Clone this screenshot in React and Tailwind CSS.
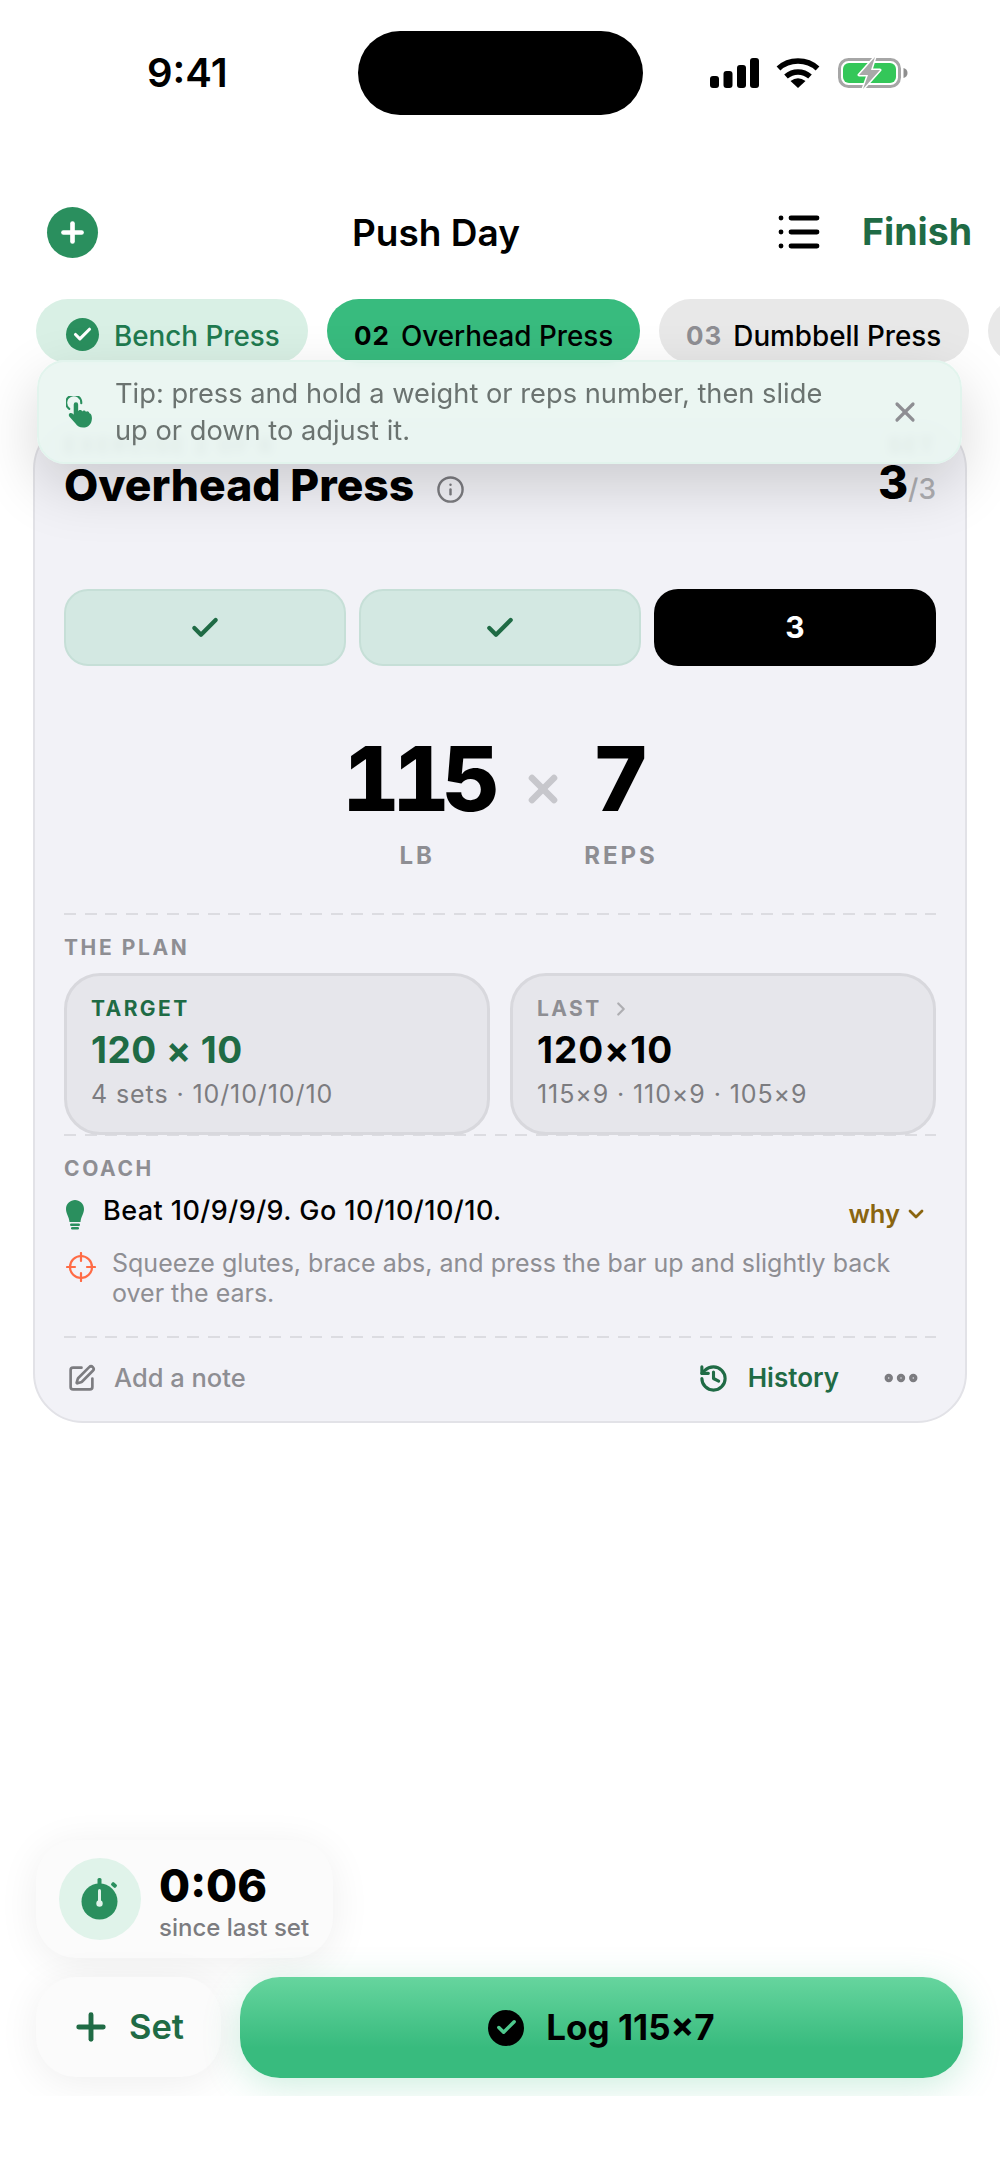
import { Check, ChevronDown, ChevronRight, Ellipsis, History, Info, List, Plus, SquarePen, X } from 'lucide-react'

const DASHES = 'h-[2px] w-full bg-[repeating-linear-gradient(90deg,#dcdce1_0,#dcdce1_12px,transparent_12px,transparent_20.5px)]'

function StatusIcons() {
  return (
    <div className="flex items-center">
      <svg width="49" height="30" viewBox="0 0 49 30" fill="#000">
        <rect x="0" y="18" width="9" height="12" rx="3" />
        <rect x="13.5" y="13" width="9" height="17" rx="3" />
        <rect x="27" y="7" width="9" height="23" rx="3" />
        <rect x="40" y="0" width="9" height="30" rx="3" />
      </svg>
      <svg className="ml-[17px]" width="44" height="30" viewBox="0 0 44 30" fill="none">
        <path d="M2.5 10.5C13 .5 31 .5 41.5 10.5" stroke="#000" strokeWidth="5.5" />
        <path d="M10 18.5C17 12.5 27 12.5 34 18.5" stroke="#000" strokeWidth="5.5" />
        <path d="M22 30L14.5 23Q22 17.5 29.5 23Z" fill="#000" />
      </svg>
      <svg className="ml-[18px]" width="70" height="32" viewBox="0 0 70 32" fill="none">
        <rect x="1.5" y="2.5" width="60" height="27" rx="9" stroke="#a6a6a6" strokeWidth="3" />
        <rect x="5" y="6" width="53" height="20" rx="6" fill="#34c759" />
        <path d="M65.5 11c2.6.6 4 2.5 4 5s-1.4 4.400-4 5z" fill="#8e8e8e" />
        <path d="M37 0L21 18h9l-5 14 17-19h-9l4-13z" fill="#a9a9a9" stroke="#fff" strokeWidth="3" strokeLinejoin="round" paintOrder="stroke" />
      </svg>
    </div>
  )
}

function StatusBar() {
  return (
    <div className="relative h-[146px] shrink-0">
      <span className="absolute left-[147px] top-[52px] text-[40px] leading-[42px] font-semibold text-black">9:41</span>
      <div className="absolute left-[358px] top-[31px] h-[84px] w-[285px] rounded-[42px] bg-black" />
      <div className="absolute left-[710px] top-[57px]"><StatusIcons /></div>
    </div>
  )
}

function Header() {
  return (
    <div className="mt-[60px] flex h-[52px] shrink-0 items-center pl-[47px] pr-[28px]">
      <div className="flex h-[51px] w-[51px] items-center justify-center rounded-full bg-[#2a8f5e]">
        <Plus size={31} strokeWidth={3.6} className="text-white" />
      </div>
      <span className="ml-[254px] text-[37px] font-semibold leading-none text-black">Push Day</span>
      <List size={48} strokeWidth={2.4} className="ml-auto text-black" />
      <span className="ml-[39px] text-[37.500px] font-bold leading-none text-[#1f6b45]">Finish</span>
    </div>
  )
}

function Chips() {
  return (
    <div className="mt-[41px] flex h-[64px] shrink-0 gap-[19px] overflow-hidden pl-[36px]">
      <div className="flex w-[272px] shrink-0 items-start gap-[15px] rounded-[32px] bg-[#d9f0e5] pl-[30px] pt-[19px]">
        <div className="flex h-[33px] w-[33px] items-center justify-center rounded-full bg-[#2a8f5e]">
          <Check size={21} strokeWidth={3.6} className="text-white" />
        </div>
        <span className="text-[27.800px] font-medium leading-[36px] text-[#1f7a4f]">Bench Press</span>
      </div>
      <div className="flex w-[313px] shrink-0 items-start gap-[11px] rounded-[32px] bg-[#38bb7e] pl-[27px] pt-[19px]">
        <span className="text-[26px] font-bold leading-[36px] tracking-[1px] text-black">02</span>
        <span className="text-[27.800px] font-medium leading-[36px] text-black">Overhead Press</span>
      </div>
      <div className="flex w-[310px] shrink-0 items-start gap-[11px] rounded-[32px] bg-[#e8e8e8] pl-[27px] pt-[19px]">
        <span className="text-[26px] font-bold leading-[36px] tracking-[1px] text-[#8e8e93]">03</span>
        <span className="text-[27.800px] font-medium leading-[36px] text-black">Dumbbell Press</span>
      </div>
      <div className="w-[200px] shrink-0 rounded-[32px] bg-[#e8e8e8]" />
    </div>
  )
}

function TipBanner() {
  return (
    <div className="absolute left-[37px] top-[360px] z-10 flex h-[104px] w-[925px] items-center rounded-[28px] border-2 border-[#e2f4ed] bg-[#e9f5f1]/90 pl-[27px] pr-[39px] shadow-[0_22px_60px_rgba(0,0,0,0.16)] backdrop-blur-[4px]">
      <svg width="27" height="32" viewBox="0 0 30 36" className="shrink-0">
        <path d="M3.500 14.500A8.500 8.500 0 1 1 17 8" fill="none" stroke="#2a8f5e" strokeWidth="2.400" strokeLinecap="round" />
        <path d="M8.500 9.500a2.500 2.500 0 0 1 5 0V17c.8-1.800 4-1.800 4.500.3.800-1.500 3.800-1.200 4.200.6 1-1.200 3.800-.6 3.800 1.600 1 0 3 1.400 3 5.500C28.800 31.500 25 35.500 19 35.500c-4 0-6.500-1.500-8.500-4.500L3.500 23c-1.800-3 1.500-5 4-3l1 1z" fill="#2a8f5e" />
      </svg>
      <p className="ml-[22px] w-[730px] text-[27.250px] leading-[37px] text-[#6b7370]">
        Tip: press and hold a weight or reps number, then slide up or down to adjust it.
      </p>
      <X size={32} strokeWidth={2.4} className="ml-auto text-[#8e8e93]" />
    </div>
  )
}

function SetPills() {
  return (
    <div className="mt-[78px] grid grid-cols-3 gap-[12.500px]">
      {[0, 1].map((i) => (
        <div key={i} className="flex h-[77px] items-center justify-center rounded-[24px] border-2 border-[#c6dfd7] bg-[#d3e8e2]">
          <Check size={32} strokeWidth={3.2} className="text-[#1f6b45]" />
        </div>
      ))}
      <div className="flex h-[77px] items-center justify-center rounded-[24px] bg-black text-[30px] font-bold text-white">3</div>
    </div>
  )
}

function Hero() {
  return (
    <div className="mt-[71px] flex items-start justify-center">
      <div className="flex flex-col items-center">
        <span className="text-[89px] font-extrabold leading-[84px] tracking-[-7.500px] text-black tabular-nums">115</span>
        <span className="mt-[21px] text-[24px] font-bold leading-[28px] tracking-[3px] text-[#8e8e93]">LB</span>
      </div>
      <X size={44} strokeWidth={3.6} className="ml-[29px] mr-[19px] mt-[30px] text-[#c7c7cc]" />
      <div className="flex flex-col items-center">
        <span className="text-[89px] font-extrabold leading-[84px] text-black">7</span>
        <span className="mt-[21px] text-[24px] font-bold leading-[28px] tracking-[3px] text-[#8e8e93]">REPS</span>
      </div>
    </div>
  )
}

function PlanBox({ label, main, sub, green }) {
  return (
    <div className="h-[162px] rounded-[36px] border-[3px] border-[#d8d8dd] bg-[#e6e6eb] pl-[24px] pt-[20px]">
      <div className={`flex items-center gap-[8px] text-[21px] font-bold leading-[26px] tracking-[2.400px] ${green ? 'text-[#1f6b45]' : 'text-[#8e8e93]'}`}>
        {label}
        {!green && <ChevronRight size={22} strokeWidth={2.400} className="text-[#aeaeb2]" />}
      </div>
      <div className={`mt-[6px] text-[37px] font-bold leading-[44px] ${green ? 'text-[#1f6b45] tracking-[0.500px]' : 'text-black tracking-[1px]'}`}>{main}</div>
      <div className="mt-[6px] text-[25px] leading-[32px] tracking-[0.900px] text-[#7c7c80]">{sub}</div>
    </div>
  )
}

function Coach() {
  return (
    <div>
      <div className="mt-[22px] text-[21px] font-bold leading-[22px] tracking-[2.600px] text-[#8e8e93]">COACH</div>
      <div className="mt-[14px] flex items-start">
        <svg width="18" height="30" viewBox="0 0 18 30" className="ml-[2px] mt-[6px] shrink-0">
          <path d="M9 0C13.500 0 18 3.500 18 9c0 4.500-3 7.500-3.500 13h-11C3 16.500 0 13.500 0 9 0 3.500 4.500 0 9 0z" fill="#2a8f5e" />
          <rect x="4" y="23.500" width="10" height="2.400" rx="1.200" fill="#2a8f5e" />
          <rect x="5" y="27" width="8" height="2.600" rx="1.300" fill="#2a8f5e" />
        </svg>
        <span className="ml-[19px] text-[27px] font-medium leading-[34px] tracking-[0.450px] text-black">Beat 10/9/9/9. Go 10/10/10/10.</span>
        <span className="ml-auto mr-[8px] mt-[3px] flex items-center gap-[4px] text-[25.500px] font-semibold leading-[34px] text-[#8a6510]">
          why
          <ChevronDown size={24} strokeWidth={2.800} />
        </span>
      </div>
      <div className="mt-[17px] flex items-start">
        <svg width="30" height="30" viewBox="0 0 30 30" fill="none" stroke="#ff6b45" strokeWidth="2.200" strokeLinecap="round" className="ml-[2px] mt-[4px] shrink-0">
          <circle cx="15" cy="15" r="11" />
          <path d="M15 1v8M15 21v8M1 15h8M21 15h8" />
        </svg>
        <p className="ml-[16px] w-[830px] text-[25px] leading-[30px] text-[#8e8e93]">
          Squeeze glutes, brace abs, and press the bar up and slightly back over the ears.
        </p>
      </div>
    </div>
  )
}

function CardFooter() {
  return (
    <div className="mt-[19px] flex items-center pl-[3px] pr-[14px]">
      <SquarePen size={29} strokeWidth={2.200} className="text-[#7c7c80]" />
      <span className="ml-[18px] text-[25.500px] font-medium leading-[30px] text-[#8e8e93]">Add a note</span>
      <History size={31} strokeWidth={2.400} className="ml-auto text-[#1f6b45]" />
      <span className="ml-[19px] text-[26px] font-semibold leading-[30px] text-[#1f6b45]">History</span>
      <Ellipsis size={42} strokeWidth={2.800} className="ml-[41px] text-[#7c7c80]" />
    </div>
  )
}

function ExerciseCard() {
  return (
    <div className="mx-[33px] mt-[56px] h-[1004px] shrink-0 rounded-[50px] border-2 border-[#e2e2e7] bg-[#f2f2f7] px-[29px] pt-[12px]">
      <div className="flex items-center justify-between text-[21px] font-bold leading-[26px] tracking-[2.500px] text-[#8e8e93]">
        <span>EXERCISE 2 OF 6</span>
        <span>SET</span>
      </div>
      <div className="flex h-[52px] items-center justify-between">
        <div className="flex items-center">
          <span className="text-[44.400px] font-extrabold leading-[52px] text-black">Overhead Press</span>
          <Info size={29} strokeWidth={2} className="ml-[22px] mt-[8px] text-[#7c7c80]" />
        </div>
        <div className="flex items-baseline">
          <span className="text-[46px] font-extrabold leading-[52px] text-black">3</span>
          <span className="text-[28px] font-medium leading-[52px] text-[#aeaeb2]">/3</span>
        </div>
      </div>
      <SetPills />
      <Hero />
      <div className={`mt-[43px] ${DASHES}`} />
      <div className="mt-[22px] text-[21px] font-bold leading-[22px] tracking-[2.600px] text-[#8e8e93]">THE PLAN</div>
      <div className="mt-[14px] grid grid-cols-2 gap-[20px]">
        <PlanBox label="TARGET" main="120 × 10" sub="4 sets · 10/10/10/10" green />
        <PlanBox label="LAST" main="120×10" sub="115×9 · 110×9 · 105×9" />
      </div>
      <div className={`-mt-px ${DASHES}`} />
      <Coach />
      <div className={`mt-[28px] ${DASHES}`} />
      <CardFooter />
    </div>
  )
}

function BottomBar() {
  return (
    <div className="mb-[78px] mt-auto shrink-0 overflow-hidden px-[36px] pb-[18px] pt-[60px]">
      <div className="flex h-[118px] w-[297px] items-center rounded-[40px] bg-[#fbfbfb] pl-[23px] shadow-[0_6px_40px_rgba(0,0,0,0.07)]">
        <div className="flex h-[82px] w-[82px] items-center justify-center rounded-full bg-[#e0f3ea]">
          <svg width="38" height="42" viewBox="0 0 38 42">
            <rect x="16.500" y="0" width="4" height="7" rx="1.500" fill="#2a8f5e" />
            <rect x="30" y="5" width="6" height="4" rx="1.500" fill="#2a8f5e" transform="rotate(40 33 7)" />
            <circle cx="18.500" cy="23.500" r="18" fill="#2a8f5e" />
            <rect x="17" y="11" width="3" height="13" rx="1.500" fill="#e0f3ea" />
            <circle cx="18.500" cy="25.500" r="3.200" fill="#e0f3ea" />
          </svg>
        </div>
        <div className="ml-[18px] pt-[6px]">
          <div className="text-[45px] font-extrabold leading-[50px] text-black">0:06</div>
          <div className="mt-[2px] text-[24px] font-medium leading-[30px] text-[#7c7c80]">since last set</div>
        </div>
      </div>
      <div className="mt-[19px] flex gap-[19px]">
        <div className="flex h-[100px] w-[185px] items-center justify-center gap-[17px] rounded-[40px] bg-[#fbfbfb] pr-[3px] shadow-[0_6px_40px_rgba(0,0,0,0.07)]">
          <Plus size={42} strokeWidth={2.800} className="text-[#1f6b45]" />
          <span className="text-[34.500px] font-semibold leading-none text-[#1f6b45]">Set</span>
        </div>
        <div className="flex h-[101px] w-[723px] items-center justify-center gap-[22px] rounded-[40px] bg-[linear-gradient(180deg,#66d59e_0%,#38bb7e_70%)] shadow-[0_8px_36px_rgba(56,187,126,0.25)]">
          <div className="flex h-[36px] w-[36px] items-center justify-center rounded-full bg-black">
            <Check size={23} strokeWidth={3.600} className="text-[#4ec88d]" />
          </div>
          <span className="text-[35px] font-bold leading-none text-black">Log 115×7</span>
        </div>
      </div>
    </div>
  )
}

export default function App() {
  return (
    <div className="relative flex h-[2174px] w-[1000px] flex-col overflow-hidden bg-white font-['Inter',sans-serif]">
      <StatusBar />
      <Header />
      <Chips />
      <ExerciseCard />
      <TipBanner />
      <BottomBar />
    </div>
  )
}
